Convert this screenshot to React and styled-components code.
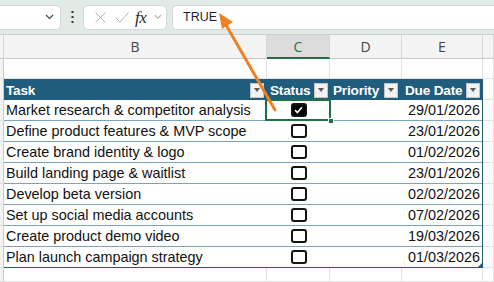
import React from "react";
import styled, { createGlobalStyle } from "styled-components";

const Global = createGlobalStyle`
  html, body { margin: 0; padding: 0; background: #fff; }
  body { width: 494px; height: 282px; overflow: hidden; font-family: "Liberation Sans", Arial, sans-serif; }
  * { box-sizing: border-box; }
`;

const Page = styled.div`
  position: relative;
  width: 494px;
  height: 282px;
  overflow: hidden;
`;

/* ---------- formula bar ---------- */
const TopBar = styled.div`
  display: flex;
  align-items: center;
  height: 35px;
  background: #e1eae5;
  border-bottom: 1px solid #cbd2ce;
`;

const NameBox = styled.div`
  width: 61px;
  height: 25px;
  background: #fff;
  border: 1px solid #d3d9d6;
  border-left: none;
  border-radius: 0 5px 5px 0;
  display: flex;
  align-items: center;
  justify-content: flex-end;
  padding-right: 6px;
`;

const Kebab = styled.div`
  width: 22px;
  display: flex;
  justify-content: center;
`;

const FuncBox = styled.div`
  width: 84px;
  height: 25px;
  background: #fff;
  border: 1px solid #d3d9d6;
  border-radius: 5px;
  display: flex;
  align-items: center;
  padding-left: 5px;
`;

const IconSlot = styled.span`
  display: inline-flex;
  align-items: center;
  justify-content: center;
  width: ${(p) => p.w}px;
`;

const Fx = styled.span`
  font-family: "Liberation Serif", "Times New Roman", serif;
  font-style: italic;
  font-size: 17px;
  color: #2b2b2b;
  letter-spacing: -0.5px;
  line-height: 1;
  width: 18px;
  margin-left: 2px;
`;

const FormulaBox = styled.div`
  flex: 1;
  height: 25px;
  margin-left: 5px;
  background: #fff;
  border: 1px solid #d3d9d6;
  border-right: none;
  border-radius: 5px 0 0 5px;
  display: flex;
  align-items: center;
  padding-left: 10px;
  font-size: 12.5px;
  color: #1f1f1f;
`;

/* ---------- sheet ---------- */
const Sheet = styled.div`
  display: grid;
  grid-template-columns: 4px 263px 63px 72px 81px 1fr;
  grid-template-rows: 24px 20px repeat(9, 21px) 1fr;
  height: 247px;
`;

const ColHead = styled.div`
  background: ${(p) => (p.selected ? "#dcdcdc" : "#f3f3f3")};
  border-right: 1px solid #d6d6d6;
  border-bottom: ${(p) => (p.selected ? "2px solid #1e7145" : "1px solid #c9c9c9")};
  color: ${(p) => (p.selected ? "#1e7145" : "#444")};
  font-family: "Open Sans", "Liberation Sans", sans-serif;
  font-size: 14px;
  display: flex;
  align-items: center;
  justify-content: center;
`;

const RowHead = styled.div`
  background: #f3f3f3;
  border-right: 1px solid #c9c9c9;
  border-bottom: 1px solid #e1e1e1;
`;

const Cell = styled.div`
  border-right: 1px solid #e1e1e1;
  border-bottom: 1px solid #e1e1e1;
`;

/* ---------- table ---------- */
const Table = styled.div`
  grid-column: 2 / 6;
  grid-row: 3 / 12;
  margin-left: -1px;
  border: 1px solid #1f5c7d;
  display: flex;
  flex-direction: column;
  background: #fff;
`;

const TRow = styled.div`
  display: grid;
  grid-template-columns: 263px 63px 72px 1fr;
  height: ${(p) => (p.header ? 20 : 21)}px;
  background: ${(p) => (p.header ? "#1f5c7d" : "#fff")};
  border-bottom: ${(p) => (p.header ? "none" : "1px solid #7ea3bd")};
  &:last-child {
    border-bottom: none;
    height: 20px;
  }
`;

const HCell = styled.div`
  display: flex;
  align-items: center;
  justify-content: space-between;
  padding: 0 ${(p) => p.pr ?? 3}px 0 ${(p) => p.pl ?? 3}px;
  color: #fff;
  font-weight: bold;
  font-size: 13.6px;
  letter-spacing: -0.2px;
  white-space: nowrap;
`;

const FilterBtn = styled.span`
  flex: none;
  width: 14px;
  height: 15px;
  background: #f2f2f2;
  border: 1px solid #c4c4c4;
  display: flex;
  align-items: center;
  justify-content: center;
  &::after {
    content: "";
    border-left: 3.5px solid transparent;
    border-right: 3.5px solid transparent;
    border-top: 4px solid #5a5a5a;
  }
`;

const DCell = styled.div`
  position: relative;
  display: flex;
  align-items: center;
  justify-content: ${(p) => p.justify || "flex-start"};
  padding: 0 2px;
  font-size: 14.4px;
  color: #111;
  white-space: nowrap;
`;

const Box = styled.span`
  width: 16px;
  height: 14px;
  border: 2px solid #141414;
  border-radius: 3px;
  background: ${(p) => (p.checked ? "#000" : "#fff")};
  display: flex;
  align-items: center;
  justify-content: center;
`;

const Selection = styled.div`
  position: absolute;
  top: -1px;
  left: -2px;
  right: -1px;
  bottom: -1px;
  border: 2px solid #1e7145;
  pointer-events: none;
`;

const Handle = styled.span`
  position: absolute;
  right: -5px;
  bottom: -5px;
  width: 6px;
  height: 6px;
  background: #1e7145;
  border: 1px solid #fff;
`;

const ResizeMark = styled.span`
  position: absolute;
  right: 0;
  bottom: 0;
  width: 0;
  height: 0;
  border-left: 4px solid transparent;
  border-bottom: 4px solid #1f5c7d;
`;

const ArrowLayer = styled.svg`
  position: absolute;
  left: 0;
  top: 0;
  pointer-events: none;
`;

const Chevron = ({ color = "#444", w = 9 }) => (
  <svg width={w} height="6" viewBox="0 0 9 6">
    <path d="M1 1 L4.5 4.5 L8 1" fill="none" stroke={color} strokeWidth="1.2" />
  </svg>
);

const Check = ({ checked }) => (
  <Box checked={checked}>
    {checked && (
      <svg width="9" height="8" viewBox="0 0 9 8">
        <path d="M1 4.2 L3.4 6.5 L8 1.3" fill="none" stroke="#fff" strokeWidth="1.6" />
      </svg>
    )}
  </Box>
);

const tasks = [
  ["Market research & competitor analysis", true, "29/01/2026"],
  ["Define product features & MVP scope", false, "23/01/2026"],
  ["Create brand identity & logo", false, "01/02/2026"],
  ["Build landing page & waitlist", false, "23/01/2026"],
  ["Develop beta version", false, "02/02/2026"],
  ["Set up social media accounts", false, "07/02/2026"],
  ["Create product demo video", false, "19/03/2026"],
  ["Plan launch campaign strategy", false, "01/03/2026"],
];

export default function App() {
  return (
    <Page>
      <Global />
      <TopBar>
        <NameBox>
          <Chevron />
        </NameBox>
        <Kebab>
          <svg width="3" height="12" viewBox="0 0 3 12">
            <rect x="0.5" y="0" width="2" height="2" fill="#333" />
            <rect x="0.5" y="5" width="2" height="2" fill="#333" />
            <rect x="0.5" y="10" width="2" height="2" fill="#333" />
          </svg>
        </Kebab>
        <FuncBox>
          <IconSlot w={22}>
            <svg width="11" height="11" viewBox="0 0 11 11">
              <path d="M0.5 0.5 L10.5 10.5 M10.5 0.5 L0.5 10.5" stroke="#b3b3b3" strokeWidth="1" />
            </svg>
          </IconSlot>
          <IconSlot w={22}>
            <svg width="14" height="11" viewBox="0 0 14 11">
              <path d="M0.5 5.5 L5 10 L13.5 0.5" fill="none" stroke="#b3b3b3" strokeWidth="1" />
            </svg>
          </IconSlot>
          <Fx>fx</Fx>
          <IconSlot w={10}>
            <Chevron color="#a8a8a8" w={8} />
          </IconSlot>
        </FuncBox>
        <FormulaBox>TRUE</FormulaBox>
      </TopBar>

      <Sheet>
        <ColHead />
        <ColHead>B</ColHead>
        <ColHead selected>C</ColHead>
        <ColHead>D</ColHead>
        <ColHead>E</ColHead>
        <ColHead />

        <RowHead />
        <Cell />
        <Cell />
        <Cell />
        <Cell />
        <Cell />

        <Table>
          <TRow header>
            <HCell pl={2}>Task<FilterBtn /></HCell>
            <HCell pr={2}>Status<FilterBtn /></HCell>
            <HCell pr={4}>Priority<FilterBtn /></HCell>
            <HCell pr={2}>Due Date<FilterBtn /></HCell>
          </TRow>
          {tasks.map(([name, done, date], i) => (
            <TRow key={name}>
              <DCell>{name}</DCell>
              <DCell justify="center">
                <Check checked={done} />
                {i === 0 && (
                  <Selection>
                    <Handle />
                  </Selection>
                )}
              </DCell>
              <DCell />
              <DCell justify="flex-end">
                {date}
                {i === tasks.length - 1 && <ResizeMark />}
              </DCell>
            </TRow>
          ))}
        </Table>

        {tasks.concat([[]]).map((_, i) => (
          <React.Fragment key={i}>
            <RowHead />
            <Cell />
          </React.Fragment>
        ))}

        <RowHead />
        <Cell />
        <Cell />
        <Cell />
        <Cell />
        <Cell />
      </Sheet>

      <ArrowLayer width="494" height="282" viewBox="0 0 494 282">
        <line x1="226" y1="25" x2="275" y2="110" stroke="#ef8122" strokeWidth="3" strokeLinecap="round" />
        <polygon points="219,13 233,22 222,29" fill="#ef8122" />
      </ArrowLayer>
    </Page>
  );
}
